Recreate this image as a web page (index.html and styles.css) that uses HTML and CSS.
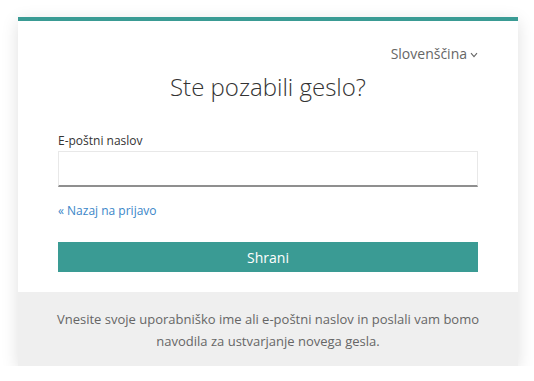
FILE: index.html
```html
<!DOCTYPE html>
<html lang="sl">
<head>
<meta charset="utf-8">
<title>Ste pozabili geslo?</title>
<link rel="stylesheet" href="styles.css">
</head>
<body>
<div class="card">
  <div class="card-body">
    <div class="lang-row">
      <span class="lang">Slovenščina
        <svg class="chev" width="8" height="6" viewBox="0 0 8 6"><path d="M1 1.2 L4 4.6 L7 1.2" fill="none" stroke="#666" stroke-width="1.1"/></svg>
      </span>
    </div>
    <h1 class="title">Ste pozabili geslo?</h1>
    <label class="label" for="email">E-poštni naslov</label>
    <input class="input" id="email" type="text">
    <a class="back" href="#">« Nazaj na prijavo</a>
    <button class="btn" type="button">Shrani</button>
  </div>
  <div class="card-foot">
    <p>Vnesite svoje uporabniško ime ali e-poštni naslov in poslali vam bomo navodila za ustvarjanje novega gesla.</p>
  </div>
</div>
</body>
</html>
```
FILE: styles.css
```css
* { box-sizing: border-box; }
html, body { margin: 0; padding: 0; background: #fff; }
body {
  font-family: "Open Sans", "Noto Sans", sans-serif;
  color: #333;
  padding-top: 17px;
  padding-left: 18px;
}
.card {
  width: 500px;
  background: #fff;
  border-top: 4px solid #3a9b94;
  box-shadow: 0 4px 16px rgba(0, 0, 0, 0.13);
}
.card-body {
  padding: 21px 40px 20px;
  display: flex;
  flex-direction: column;
}
.lang-row {
  display: flex;
  justify-content: flex-end;
  height: 24px;
  line-height: 24px;
}
.lang {
  font-size: 14px;
  color: #666;
  display: flex;
  align-items: center;
  gap: 3px;
}
.chev { margin-top: 2px; }
.title {
  margin: 5px 0 0;
  font-size: 24px;
  font-weight: 300;
  line-height: 32px;
  text-align: center;
  color: #333;
}
.label {
  margin-top: 29px;
  font-size: 12px;
  line-height: 18px;
  color: #333;
}
.input {
  margin-top: 1px;
  height: 36px;
  width: 100%;
  border: 1px solid #e8e8e8;
  border-bottom: 2px solid #8f8f8f;
  background: #fff;
  outline: none;
}
.back {
  margin-top: 15px;
  font-size: 12px;
  line-height: 18px;
  color: #3a86c8;
  text-decoration: none;
  align-self: flex-start;
}
.btn {
  margin-top: 22px;
  height: 30px;
  border: 0;
  background: #3a9b94;
  color: #fff;
  font-family: inherit;
  font-size: 14px;
  padding: 0;
}
.card-foot {
  background: #efefef;
  padding: 16px 30px 14px;
}
.card-foot p {
  margin: 0;
  font-size: 13px;
  line-height: 22px;
  color: #666;
  text-align: center;
}
```
